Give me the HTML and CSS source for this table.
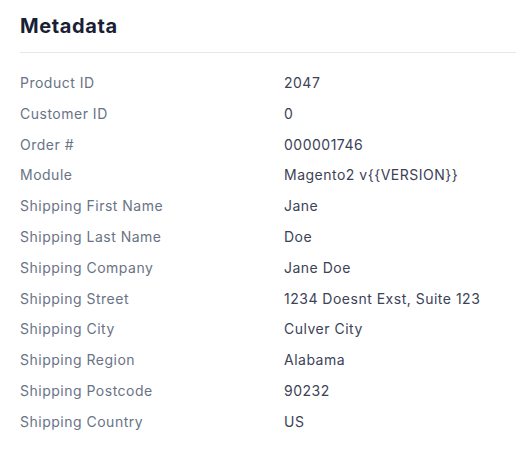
FILE: index.html
```html
<!DOCTYPE html>
<html>
<head>
<meta charset="utf-8">
<link rel="stylesheet" href="styles.css">
</head>
<body>
<section class="panel">
  <h2 class="title">Metadata</h2>
  <dl class="meta">
    <div class="row"><dt>Product ID</dt><dd>2047</dd></div>
    <div class="row"><dt>Customer ID</dt><dd>0</dd></div>
    <div class="row"><dt>Order #</dt><dd>000001746</dd></div>
    <div class="row"><dt>Module</dt><dd>Magento2 v{{VERSION}}</dd></div>
    <div class="row"><dt>Shipping First Name</dt><dd>Jane</dd></div>
    <div class="row"><dt>Shipping Last Name</dt><dd>Doe</dd></div>
    <div class="row"><dt>Shipping Company</dt><dd>Jane Doe</dd></div>
    <div class="row"><dt>Shipping Street</dt><dd>1234 Doesnt Exst, Suite 123</dd></div>
    <div class="row"><dt>Shipping City</dt><dd>Culver City</dd></div>
    <div class="row"><dt>Shipping Region</dt><dd>Alabama</dd></div>
    <div class="row"><dt>Shipping Postcode</dt><dd>90232</dd></div>
    <div class="row"><dt>Shipping Country</dt><dd>US</dd></div>
  </dl>
</section>
</body>
</html>
```
FILE: styles.css
```css
html, body {
  margin: 0;
  padding: 0;
  background: #ffffff;
}
body {
  font-family: Inter, "Noto Sans", sans-serif;
  -webkit-font-smoothing: antialiased;
}
.panel {
  padding: 12px 0 0 20px;
}
.title {
  margin: 0;
  font-size: 20px;
  line-height: 28px;
  font-weight: 700;
  letter-spacing: 0.6px;
  color: #1a1f36;
  padding-bottom: 12px;
  border-bottom: 1px solid #e3e8ee;
}
.meta {
  margin: 15px 0 0;
  padding: 0;
}
.row {
  display: grid;
  grid-template-columns: 264px 1fr;
  padding: 5px 0;
  font-size: 14px;
  line-height: 20.8px;
  letter-spacing: 0.5px;
}
.row dt {
  color: #697386;
}
.row dd {
  margin: 0;
  color: #3c4257;
}
```
